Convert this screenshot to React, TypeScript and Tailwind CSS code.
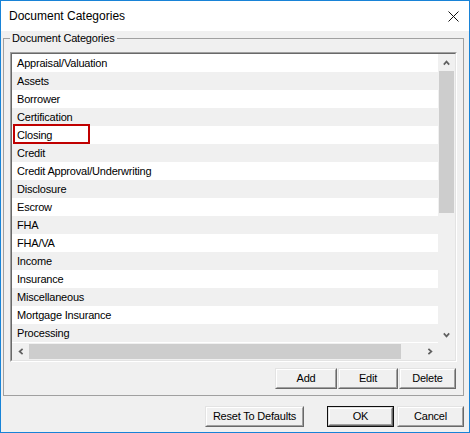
import { FC, ReactNode } from 'react'

// ---------------------------------------------------------------------------
// Data
// ---------------------------------------------------------------------------

const CATEGORIES = [
  'Appraisal/Valuation',
  'Assets',
  'Borrower',
  'Certification',
  'Closing',
  'Credit',
  'Credit Approval/Underwriting',
  'Disclosure',
  'Escrow',
  'FHA',
  'FHA/VA',
  'Income',
  'Insurance',
  'Miscellaneous',
  'Mortgage Insurance',
  'Processing',
]

// the one the screenshot has boxed in red
const HIGHLIGHTED = 'Closing'

// ---------------------------------------------------------------------------
// Small pieces
// ---------------------------------------------------------------------------

const Chevron: FC<{ dir: 'up' | 'down' | 'left' | 'right' }> = ({ dir }) => {
  const d = {
    up: 'M0.8 4.6 L3.5 1.6 L6.2 4.6',
    down: 'M0.8 1.4 L3.5 4.4 L6.2 1.4',
    left: 'M4.6 0.8 L1.6 3.5 L4.6 6.2',
    right: 'M1.4 0.8 L4.4 3.5 L1.4 6.2',
  }[dir]
  const vertical = dir === 'up' || dir === 'down'
  return (
    <svg width={vertical ? 7 : 6} height={vertical ? 6 : 7} viewBox={vertical ? '0 0 7 6' : '0 0 6 7'}>
      <path d={d} stroke="#606060" strokeWidth="1.7" fill="none" />
    </svg>
  )
}

const Button: FC<{ className: string; isDefault?: boolean; children: ReactNode }> = ({ className, isDefault, children }) => (
  <div className={`${className} h-[21px] ${isDefault ? 'border border-[#0f0f0f]' : ''}`}>
    <div className="h-full border border-t-[#e3e3e3] border-l-[#e3e3e3] border-r-[#696969] border-b-[#696969]">
      <div className="h-full flex items-center justify-center bg-[#f0f0f0] border border-t-white border-l-white border-r-[#a0a0a0] border-b-[#a0a0a0] tracking-[-0.2px]">
        {children}
      </div>
    </div>
  </div>
)

// ---------------------------------------------------------------------------
// List box
// ---------------------------------------------------------------------------

function CategoryList() {
  return (
    <div className="border border-t-[#a0a0a0] border-l-[#a0a0a0] border-r-white border-b-white">
      <div className="border border-t-[#696969] border-l-[#696969] border-r-[#e3e3e3] border-b-[#e3e3e3] bg-white grid grid-cols-[1fr_17px] grid-rows-[289px_17px]">
        {/* rows */}
        <ul className="overflow-hidden">
          {CATEGORIES.map((name, i) => (
            <li
              key={name}
              className={`relative h-[18px] flex items-center pl-[5px] tracking-[-0.2px] ${i % 2 ? 'bg-[#f0f0f0]' : 'bg-white'}`}
            >
              {name}
              {name === HIGHLIGHTED && (
                <span className="absolute left-px -top-[2px] w-[77px] h-[20px] border-2 border-[#c00000]" />
              )}
            </li>
          ))}
        </ul>

        {/* vertical scrollbar */}
        <div className="flex flex-col bg-[#f0f0f0]">
          <div className="h-[17px] flex items-center justify-center">
            <Chevron dir="up" />
          </div>
          <div className="h-[142px] mx-px bg-[#cdcdcd]" />
          <div className="flex-1" />
          <div className="h-[17px] flex items-center justify-center">
            <Chevron dir="down" />
          </div>
        </div>

        {/* horizontal scrollbar */}
        <div className="flex bg-[#f0f0f0]">
          <div className="w-[17px] flex items-center justify-center">
            <Chevron dir="left" />
          </div>
          <div className="w-[372px] my-px bg-[#cdcdcd]" />
          <div className="flex-1" />
          <div className="w-[17px] flex items-center justify-center">
            <Chevron dir="right" />
          </div>
        </div>

        {/* corner */}
        <div className="bg-[#f0f0f0]" />
      </div>
    </div>
  )
}

// ---------------------------------------------------------------------------
// Dialog
// ---------------------------------------------------------------------------

export default function App() {
  return (
    <div className="w-[470px] h-[433px] border border-[#1883d7] bg-[#f0f0f0] flex flex-col text-[11px] text-black font-['Liberation_Sans',Arial,sans-serif]">
      {/* title bar */}
      <div className="h-[30px] bg-white flex items-center justify-between pl-[8px] pr-[10px]">
        <span className="text-[12px] text-[#000]">Document Categories</span>
        <svg width="11" height="11" viewBox="0 0 11 11">
          <path d="M0.5 0.5 L10.5 10.5 M10.5 0.5 L0.5 10.5" stroke="#111" strokeWidth="1" fill="none" />
        </svg>
      </div>

      {/* group box */}
      <fieldset className="ml-[2px] w-[461px] border border-[#a0a0a0] px-[6px] pt-[7px] pb-[6px]">
        <legend className="px-[2px] leading-[14px] tracking-[-0.2px]">Document Categories</legend>
        <CategoryList />
        <div className="mt-[6px] flex justify-end gap-px">
          <Button className="w-[62px]">Add</Button>
          <Button className="w-[60px]">Edit</Button>
          <Button className="w-[57px] mr-px">Delete</Button>
        </div>
      </fieldset>

      {/* dialog buttons */}
      <div className="mt-[10px] flex justify-end pr-[5px]">
        <Button className="w-[99px] mr-[23px]">Reset To Defaults</Button>
        <Button className="w-[67px] mr-[3px]" isDefault>OK</Button>
        <Button className="w-[67px]">Cancel</Button>
      </div>
    </div>
  )
}
